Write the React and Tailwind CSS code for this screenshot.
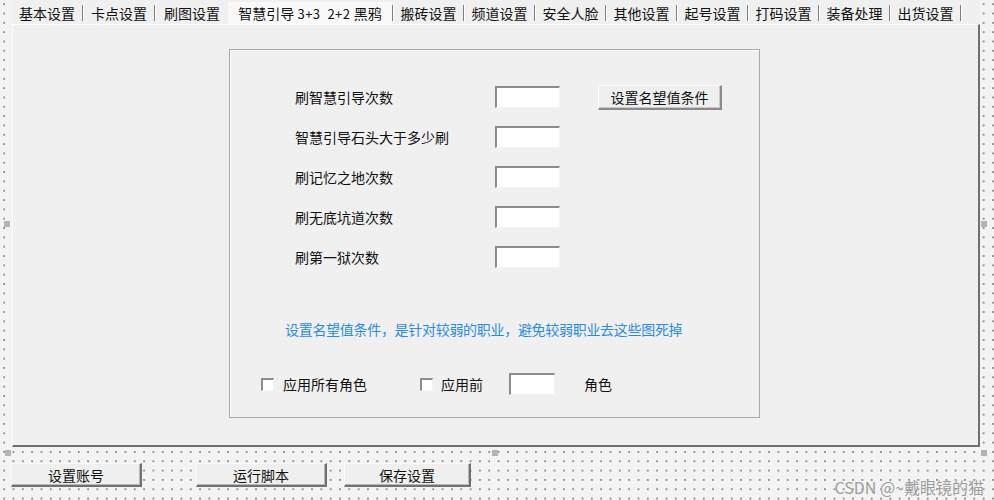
import React from 'react';

const tabs = [
  '基本设置', '卡点设置', '刷图设置', '智慧引导 3+3 2+2 黑鸦', '搬砖设置', '频道设置',
  '安全人脸', '其他设置', '起号设置', '打码设置', '装备处理', '出货设置',
];

const rows = ['刷智慧引导次数', '智慧引导石头大于多少刷', '刷记忆之地次数', '刷无底坑道次数', '刷第一狱次数'];

const font = { fontFamily: '"Noto Sans CJK SC", "Noto Sans", sans-serif' };

// sunken edit box, like a classic win32 EDIT
const Edit = ({ className = '' }) => (
  <div className={`h-[22px] bg-white border-t-2 border-l-2 border-[#8c8c8c] border-b border-r border-b-[#f4f4f4] border-r-[#f4f4f4] ${className}`} />
);

const Check = () => (
  <div className="w-[13px] h-[13px] bg-white border-t-2 border-l-2 border-[#8c8c8c] border-b border-r border-b-[#f4f4f4] border-r-[#f4f4f4]" />
);

const Handle = ({ className }) => (
  <div className={`absolute w-[6px] h-[6px] bg-[#b4b4b4] ${className}`} />
);

const Sep = () => <div className="my-[3px] w-[2px] border-l border-[#7e7e7e] bg-white" />;

const bottomButtons = [
  { label: '设置账号', cls: 'w-[131px]' },
  { label: '运行脚本', cls: 'w-[131px] ml-[54px]' },
  { label: '保存设置', cls: 'w-[127px] ml-[17px]' },
];

export default function App() {
  return (
    <div
      style={font}
      className="relative w-[994px] h-[500px] overflow-hidden bg-[#f3f3f3] bg-[radial-gradient(circle,#8f8f8f_0.9px,transparent_1.2px)] bg-[size:9.33px_9.33px] bg-[position:-0.5px_-0.5px] text-[14px] text-[#111] leading-none"
    >
      {/* tab control */}
      <div className="ml-[12px] w-[968px] h-[447px] flex flex-col bg-[#f0f0f0]">
        <div className="h-[24px] flex items-stretch pt-[2px]">
          {tabs.map((t, i) => {
            if (i === 3) {
              return (
                <div key={t} className="flex items-stretch">
                  <div className="w-[164px] flex items-center justify-center whitespace-nowrap bg-[#f9f9f9]">
                    <span>
                      智慧引导 <span className="text-[13px] tracking-[0.5px]">3+3&nbsp; 2+2</span> 黑鸦
                    </span>
                  </div>
                  <Sep />
                </div>
              );
            }
            const w = i < 3 ? 'w-[70px]' : 'w-[69px]';
            return (
              <div key={t} className="flex items-stretch">
                <div className={`${i === 2 ? 'w-[72px]' : w} flex items-center justify-center whitespace-nowrap`}>
                  {t}
                </div>
                {i !== 2 && <Sep />}
              </div>
            );
          })}
        </div>

        <div className="flex-1 border-t border-l border-[#fbfbfb] border-r-2 border-b-2 border-r-[#707070] border-b-[#707070]">
          {/* group box */}
          <div className="ml-[216px] mt-[24px] w-[531px] h-[369px] border border-[#a9a9a9] shadow-[inset_1px_1px_0_#ffffff]">
            <div className="flex pt-[36px]">
              <div className="flex flex-col gap-[18px] pl-[65px]">
                {rows.map((r) => (
                  <div key={r} className="flex items-center h-[22px]">
                    <span className="w-[200px]">{r}</span>
                    <Edit className="w-[65px]" />
                  </div>
                ))}
              </div>
              <button
                style={font}
                className="ml-[38px] h-[25px] w-[124px] mt-[-1px] bg-[#efefef] text-[14px] text-[#111] border-t border-l border-[#fdfdfd] border-r-2 border-b-2 border-r-[#8a8a8a] border-b-[#8a8a8a] shadow-[inset_-1px_-1px_0_#c8c8c8]"
              >
                设置名望值条件
              </button>
            </div>

            <div className="mt-[51px] pl-[55px] h-[20px] flex items-center text-[#2a8be4] tracking-[-0.3px]">
              设置名望值条件，是针对较弱的职业，避免较弱职业去这些图死掉
            </div>

            <div className="mt-[34px] flex items-center pl-[31px] h-[22px]">
              <Check />
              <span className="ml-[9px] w-[137px]">应用所有角色</span>
              <Check />
              <span className="ml-[8px]">应用前</span>
              <Edit className="ml-[26px] w-[46px]" />
              <span className="ml-[29px]">角色</span>
            </div>
          </div>
        </div>
      </div>

      {/* bottom buttons */}
      <div className="flex mt-[16px] ml-[11px]">
        {bottomButtons.map((b) => (
          <button
            key={b.label}
            style={font}
            className={`h-[24px] ${b.cls} bg-[#efefef] text-[14px] text-[#111] border-t border-l border-[#fafafa] border-r-2 border-b-2 border-r-[#707070] border-b-[#707070] shadow-[inset_-1px_-1px_0_#b8b8b8]`}
          >
            {b.label}
          </button>
        ))}
      </div>

      {/* designer selection handles */}
      <Handle className="left-[4px] top-[221px]" />
      <Handle className="left-[981px] top-[221px]" />
      <Handle className="left-[5px] top-[450px]" />
      <Handle className="left-[492px] top-[450px]" />
      <Handle className="left-[981px] top-[450px]" />

      {/* watermark */}
      <div className="absolute right-[10px] bottom-[5px] text-[16px] text-[#9a9a9a] [text-shadow:0_0_1px_#fff]">
        CSDN @~戴眼镜的猫
      </div>
    </div>
  );
}
